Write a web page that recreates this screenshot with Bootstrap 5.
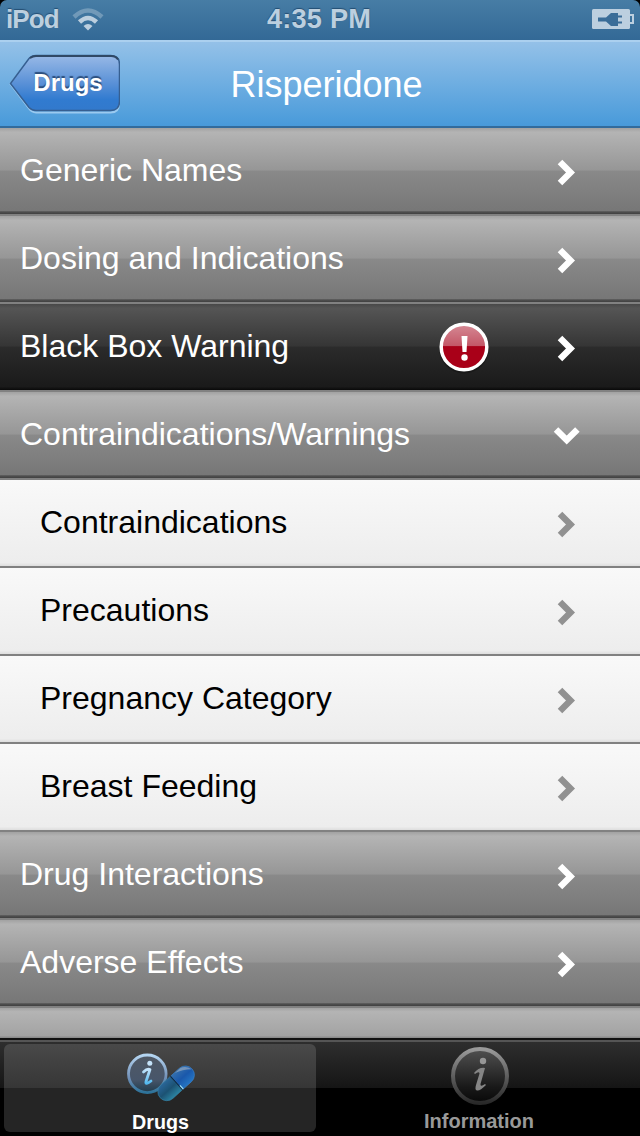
<!DOCTYPE html>
<html lang="en">
<head>
<meta charset="utf-8">
<meta name="viewport" content="width=device-width, initial-scale=1">
<title>Risperidone</title>
<link href="https://cdn.jsdelivr.net/npm/bootstrap@5.3.0/dist/css/bootstrap.min.css" rel="stylesheet">
<style>
body{font-family:"Liberation Sans",Arial,sans-serif;background:#000;line-height:1}
.screen{width:640px;height:1136px}
.statusbar{height:40px;background:linear-gradient(#477da5,#336996);border-radius:7px 7px 0 0;color:#bccfdf;font-weight:700;font-size:26px;text-shadow:0 -1px 1px #244e73;padding:0 6px 2px}
.statusbar .carrier{letter-spacing:-.9px}
.statusbar .wifi{margin-left:13px}
.statusbar .clock{font-size:27.2px;letter-spacing:.2px;padding-right:2px}
.titlebar{height:88px;background:linear-gradient(#94c1e8,#489ada);border-top:2px solid #abd0ef;border-bottom:2px solid #326b9c}
.titlebar h1{font-size:36px;color:#fff;line-height:1;padding-left:5px;padding-top:1px}
.back{width:112px;height:60px}
.back-label{color:#fff;font-size:24px;font-weight:700;text-shadow:0 -2px 1px #2b4e7d;padding-bottom:2px}
.list-group-flush>.topic{height:88px;padding:0 56px 0 20px;font-size:32px;color:#fff;border-width:0 0 2px;border-color:#818181;border-radius:0;background:linear-gradient(#a2a2a2 0,#b4b4b4 5%,#969696 49%,#898989 50%,#777 96%,#505050 97.5%,#404040 100%)}
.topic span{position:relative;top:-1.5px}
.list-group-flush>.topic.boxed{background:linear-gradient(#484848 0,#555 5%,#353535 49%,#2b2b2b 50%,#1a1a1a 96%,#090909 100%)}
.list-group-flush>.topic.sub{padding-left:40px;color:#000;background:linear-gradient(#f9f9f9,#ededed 96%,#dedede)}
.list-group-flush>.topic.cut{height:30px;border:0;background:linear-gradient(#a2a2a2,#b4b4b4 12%,#a3a3a3 92%,#858585)}
.topic .chev{margin-top:3px}
.sub .chev{color:#919191}
.arrow-down{margin-right:4px}
.alert-mark{margin:0 49px 0 0}
.tabbar{height:98px;border-top:2px solid #111;background:linear-gradient(#555 0 2px,#2e2e2e 2px,#151515 48px,#000 48px);padding:4px 4px}
.tab-item{width:312px;height:88px;border-radius:6px;color:#999;font-weight:700;font-size:20px}
.tab-item.active{color:#fff;background:linear-gradient(#494949,#363636 44px,#252525 44px)}
.tab-item.active span{font-size:19.7px;line-height:20px;padding-left:1px;padding-top:1px}
.tab-item:not(.active) span{padding-right:2px}
</style>
</head>
<body>
<div class="screen d-flex flex-column overflow-hidden">
  <header class="statusbar d-flex align-items-center flex-shrink-0">
    <div class="d-flex align-items-center col">
      <span class="carrier">iPod</span>
      <svg class="wifi" width="32" height="24" viewBox="0 0 32 24" fill="none" stroke="#bccfdf">
        <path d="M2 10Q16-3 30 10" stroke-width="4.5" opacity=".4"/>
        <path d="M7.5 15Q16 7 24.500 15" stroke-width="4.500"/>
        <path d="M11.500 19Q16 15 20.500 19L16 23.500Z" fill="#bccfdf" stroke="none"/>
      </svg>
    </div>
    <span class="clock">4:35 PM</span>
    <div class="col d-flex justify-content-end">
      <svg width="42" height="22" viewBox="0 0 42 22">
        <rect width="38" height="20" y="1" rx="1.5" fill="#bccfdf"/>
        <path d="M38 7h3v8h-3" fill="none" stroke="#bccfdf" stroke-width="2"/>
        <path d="M6 9.500h8l5-4.500h7v2.500h4v2h-4v4h4v2h-4v2.500h-7l-5-4.500H6z" fill="#3a6d98"/>
      </svg>
    </div>
  </header>
  <nav class="titlebar d-flex align-items-center flex-shrink-0 position-relative">
    <a href="#" class="back d-block position-relative ms-2">
      <svg width="112" height="60" viewBox="0 0 112 60">
        <defs><linearGradient id="bk" x2="0" y2="1"><stop stop-color="#98b9e6"/><stop offset=".5" stop-color="#5a91d7"/><stop offset=".8" stop-color="#317bd0"/><stop offset="1" stop-color="#3279cc"/></linearGradient></defs>
        <path d="M28 3Q24 3 21 6L2.500 30 21 54.500Q24 58.500 28 58.500H102.500Q111 58.500 111 50V12" fill="none" stroke="#9bcaf0" stroke-width="2"/>
        <path d="M28 1.500H102.500Q111.500 1.500 111.500 10.500V47.500Q111.500 56.500 102.500 56.500H28Q24 56.500 21 53.500L2.500 29.500 21 4.500Q24 1.500 28 1.500Z" fill="url(#bk)" stroke="#365f91" stroke-width="1.500"/>
        <path d="M22 4Q25 2 28 2H103Q108 2 110 5.500" fill="none" stroke="#304966" stroke-width="2"/>
      </svg>
      <span class="back-label position-absolute top-50 start-50 translate-middle ms-1">Drugs</span>
    </a>
    <h1 class="position-absolute start-50 top-50 translate-middle m-0 fw-normal ms-1">Risperidone</h1>
  </nav>
  <svg class="d-none"><symbol id="chevron" viewBox="0 0 20 28"><path d="M3 3 13.500 13.500 3 24" fill="none" stroke="currentColor" stroke-width="6.400"/></symbol></svg>
  <main class="list-group list-group-flush flex-grow-1 overflow-hidden rounded-0">
    <a class="topic list-group-item d-flex align-items-center justify-content-between flex-shrink-0"><span>Generic Names</span><svg class="chev" width="27" height="28"><use href="#chevron" width="20" height="28"/></svg></a>
    <a class="topic list-group-item d-flex align-items-center justify-content-between flex-shrink-0"><span>Dosing and Indications</span><svg class="chev" width="27" height="28"><use href="#chevron" width="20" height="28"/></svg></a>
    <a class="topic boxed list-group-item d-flex align-items-center flex-shrink-0"><span class="me-auto">Black Box Warning</span>
      <svg class="alert-mark" width="56" height="56" viewBox="0 0 56 56">
        <defs><linearGradient id="rd" x2="0" y2="1"><stop stop-color="#d68a95"/><stop offset=".48" stop-color="#c35767"/><stop offset=".49" stop-color="#a90018"/><stop offset="1" stop-color="#a90018"/></linearGradient></defs>
        <circle cx="28" cy="29.500" r="25" fill="#111" opacity=".5"/><circle cx="28" cy="28" r="22.800" fill="url(#rd)" stroke="#fff" stroke-width="3.500"/>
        <path d="M25.500 17h6l-1 16h-4z" fill="#fff"/><circle cx="28.500" cy="38.500" r="3.200" fill="#fff"/>
      </svg>
      <svg class="chev ms-3" width="27" height="28"><use href="#chevron" width="20" height="28"/></svg></a>
    <a class="topic list-group-item d-flex align-items-center justify-content-between flex-shrink-0"><span>Contraindications/Warnings</span><svg class="arrow-down" width="27" height="20" viewBox="0 0 27 20"><path d="M3 4.500 13.700 15 24.400 4.500" fill="none" stroke="#fff" stroke-width="6.400"/></svg></a>
    <a class="topic sub list-group-item d-flex align-items-center justify-content-between flex-shrink-0"><span>Contraindications</span><svg class="chev" width="27" height="28"><use href="#chevron" width="20" height="28"/></svg></a>
    <a class="topic sub list-group-item d-flex align-items-center justify-content-between flex-shrink-0"><span>Precautions</span><svg class="chev" width="27" height="28"><use href="#chevron" width="20" height="28"/></svg></a>
    <a class="topic sub list-group-item d-flex align-items-center justify-content-between flex-shrink-0"><span>Pregnancy Category</span><svg class="chev" width="27" height="28"><use href="#chevron" width="20" height="28"/></svg></a>
    <a class="topic sub list-group-item d-flex align-items-center justify-content-between flex-shrink-0"><span>Breast Feeding</span><svg class="chev" width="27" height="28"><use href="#chevron" width="20" height="28"/></svg></a>
    <a class="topic list-group-item d-flex align-items-center justify-content-between flex-shrink-0"><span>Drug Interactions</span><svg class="chev" width="27" height="28"><use href="#chevron" width="20" height="28"/></svg></a>
    <a class="topic list-group-item d-flex align-items-center justify-content-between flex-shrink-0"><span>Adverse Effects</span><svg class="chev" width="27" height="28"><use href="#chevron" width="20" height="28"/></svg></a>
    <div class="topic cut flex-shrink-0"></div>
  </main>
  <footer class="tabbar d-flex gap-2 flex-shrink-0">
    <a class="tab-item active d-flex flex-column align-items-center text-decoration-none">
      <svg width="76" height="67" viewBox="0 0 76 67">
        <defs>
          <linearGradient id="ring" x2="0" y2="1"><stop stop-color="#b5d6f2"/><stop offset=".6" stop-color="#7391b8"/><stop offset="1" stop-color="#2d7299"/></linearGradient>
          <linearGradient id="disc" x2="0" y2="1"><stop stop-color="#505965"/><stop offset=".65" stop-color="#48566a"/><stop offset="1" stop-color="#1f3b4c"/></linearGradient>
          <linearGradient id="ii" x2="0" y2="1"><stop stop-color="#c5e3fa"/><stop offset="1" stop-color="#52b9ef"/></linearGradient>
          <linearGradient id="capA" x2="0" y2="1"><stop stop-color="#2a6699"/><stop offset=".5" stop-color="#1c5273"/><stop offset="1" stop-color="#2b83a1"/></linearGradient>
          <linearGradient id="capB" x2="0" y2="1"><stop stop-color="#346fad"/><stop offset=".5" stop-color="#1a58ab"/><stop offset="1" stop-color="#2475c4"/></linearGradient>
        </defs>
        <circle cx="25.300" cy="29.800" r="18.800" fill="url(#disc)" stroke="url(#ring)" stroke-width="2.800"/>
        <circle cx="27.800" cy="19.300" r="2.500" fill="#c5e3fa"/>
        <path d="M21.500 28Q25 24.500 28 25.500L24 37.500Q23 41.500 29 37" fill="none" stroke="url(#ii)" stroke-width="2.800" stroke-linecap="round" stroke-linejoin="round"/>
        <g transform="rotate(-42 54.500 39)">
          <path d="M54 30H41.500A9 9 0 0 0 41.500 48H54Z" fill="url(#capA)" stroke="#347d9f" stroke-width=".7"/>
          <path d="M55 30H66.500A9 9 0 0 1 66.500 48H55Z" fill="url(#capB)" stroke="#387bc0" stroke-width=".7"/>
          <path d="M60 30.500H67Q73 32 75 39Q68 33 60 30.500Z" fill="#a5b3c5" opacity=".6"/>
          <path d="M54.500 30V48" stroke="#0b2948" stroke-width="1.200"/><path d="M55.500 43V48" stroke="#9cdcf5" stroke-width="1.200"/>
        </g>
      </svg>
      <span>Drugs</span>
    </a>
    <a class="tab-item d-flex flex-column align-items-center text-decoration-none">
      <svg width="68" height="67" viewBox="0 0 68 67">
        <defs><linearGradient id="gr" x2="0" y2="1"><stop stop-color="#9a9a9a"/><stop offset=".5" stop-color="#5f5f5f"/><stop offset="1" stop-color="#292929"/></linearGradient><linearGradient id="gd" x2="0" y2="1"><stop stop-color="#515151"/><stop offset=".7" stop-color="#191919"/><stop offset="1" stop-color="#080808"/></linearGradient></defs>
        <circle cx="34" cy="32" r="27" fill="url(#gd)" stroke="url(#gr)" stroke-width="4"/>
        <circle cx="37" cy="17" r="3.200" fill="#969696"/>
        <path d="M28 29Q33 23 39 24L34.500 40Q34 43.500 39 40L40 41Q34 47 31 46.500Q28.500 46 30 41L33.500 29.500Q33 27 29 30Z" fill="#858585"/>
      </svg>
      <span>Information</span>
    </a>
  </footer>
</div>
<script src="https://cdn.jsdelivr.net/npm/bootstrap@5.3.0/dist/js/bootstrap.bundle.min.js"></script>
</body>
</html>
